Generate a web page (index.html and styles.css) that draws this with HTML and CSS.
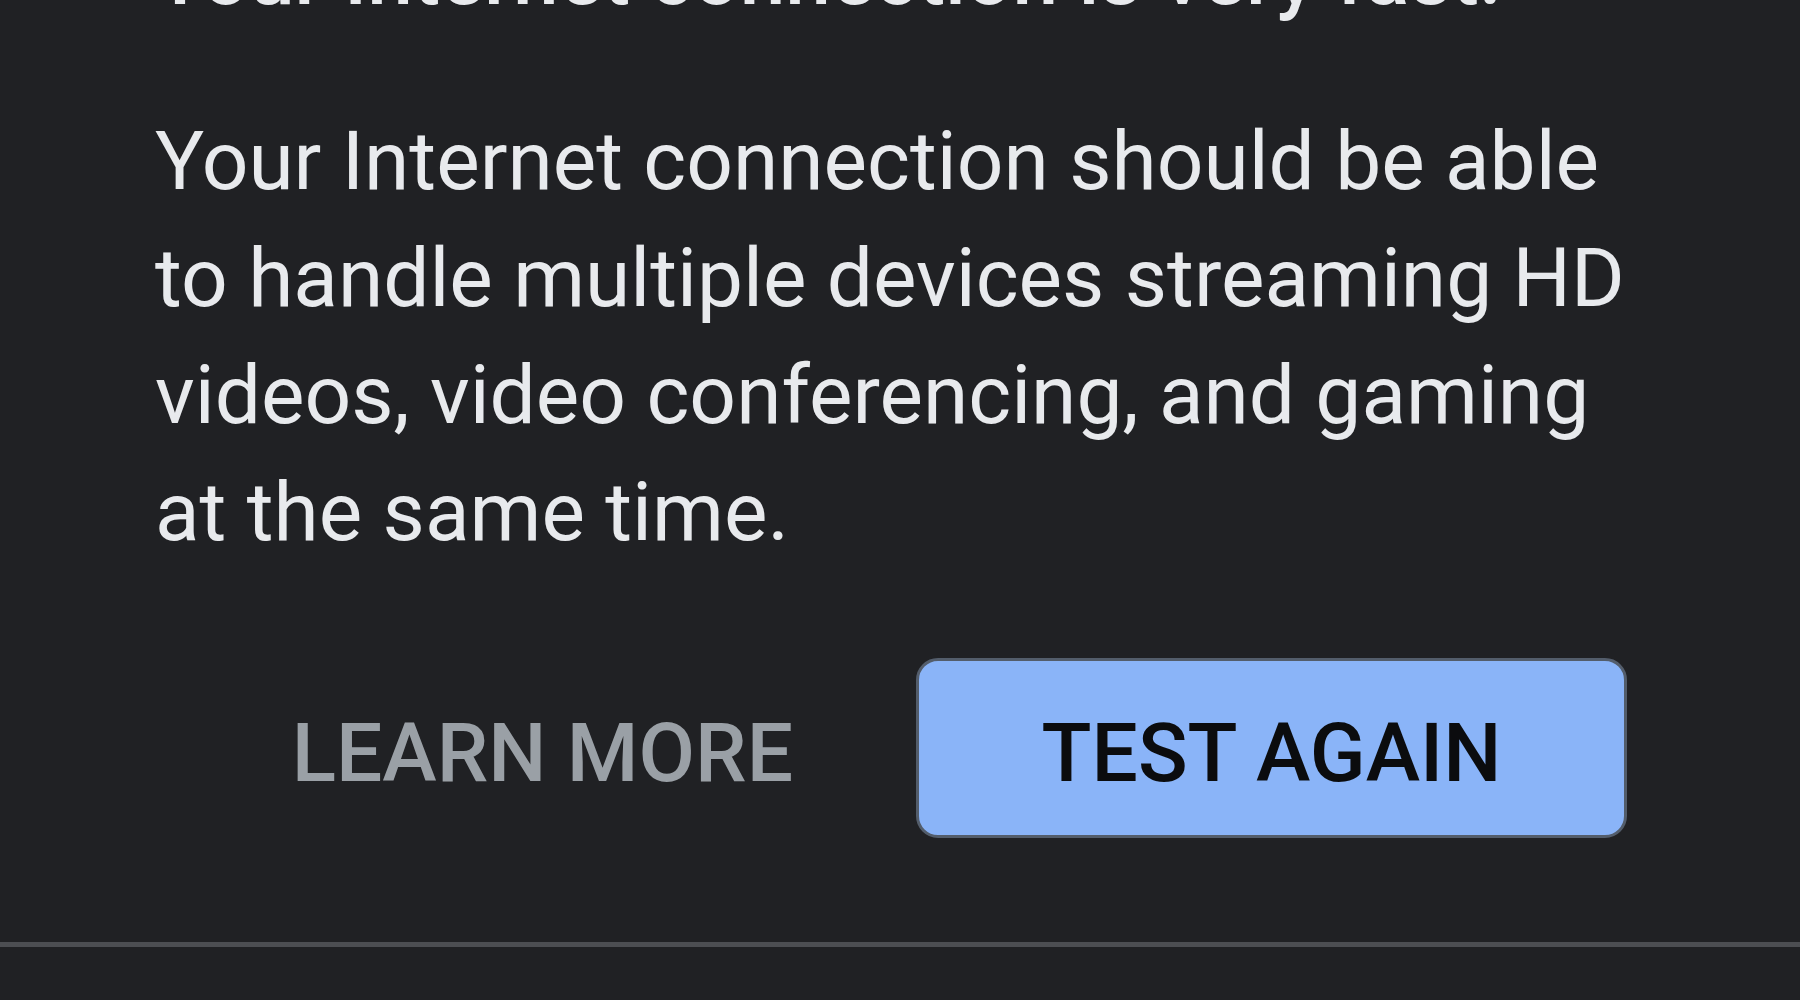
FILE: index.html
```html
<!DOCTYPE html>
<html lang="en">
<head>
  <meta charset="UTF-8" />
  <meta name="viewport" content="width=device-width, initial-scale=1.0" />
  <title>Internet speed test</title>
  <link rel="stylesheet" href="styles.css">
</head>
<body>

  <main class="result">
    <h2 class="result-title">Your Internet connection is very fast.</h2>
    <p class="result-text">
      Your Internet connection should be able<br>
      to handle multiple devices streaming HD<br>
      videos, video conferencing, and gaming<br>
      at the same time.
    </p>

    <div class="actions">
      <button class="btn btn-text" type="button">Learn more</button>
      <button class="btn btn-filled" type="button">Test again</button>
    </div>
  </main>

  <div class="divider"></div>

</body>
</html>
```

FILE: styles.css
```css
* {
  margin: 0;
  padding: 0;
  box-sizing: border-box;
}

html,
body {
  height: 100%;
  overflow: hidden;
}

body {
  background: #202124;
  color: #e8eaed;
  font-family: 'Roboto', 'Noto Sans', sans-serif;
}

.result {
  padding: 0 173px 0 155px;
}

/* page is scrolled, only the bottom of the heading shows */
.result-title {
  margin-top: -82px;
  font-size: 82px;
  font-weight: 500;
  line-height: 117px;
  white-space: nowrap;
}

.result-text {
  margin-top: 68px;
  font-size: 82px;
  line-height: 117px;
  white-space: nowrap;
}

.actions {
  display: flex;
  justify-content: flex-end;
  align-items: center;
  gap: 120px;
  margin-top: 87px;
}

.btn {
  font-family: inherit;
  font-size: 82px;
  font-weight: 500;
  text-transform: uppercase;
  border: 3px solid transparent;
  background: none;
  padding-top: 10px;
  line-height: 164px;
  cursor: pointer;
}

.btn-text {
  color: #9aa0a6;
}

.btn-filled {
  background: #8ab4f8;
  color: #0b0c0e;
  border-color: #535d6b;
  border-radius: 22px;
  width: 711px;
}

.divider {
  margin-top: 104px;
  height: 5px;
  background: #4c4e52;
}
```
